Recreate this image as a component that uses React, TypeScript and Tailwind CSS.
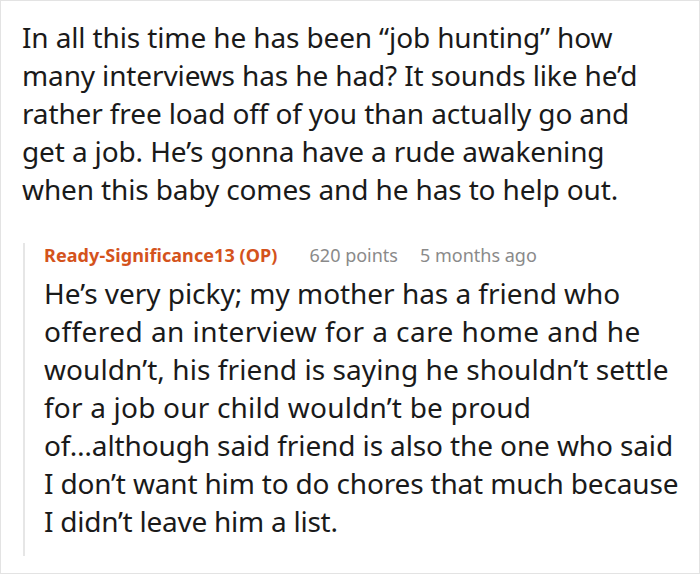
const parentLines = [
  'In all this time he has been “job hunting” how',
  'many interviews has he had? It sounds like he’d',
  'rather free load off of you than actually go and',
  'get a job. He’s gonna have a rude awakening',
  'when this baby comes and he has to help out.',
];

// Each reply line keeps its own spacing so the breaks land where the screenshot has them
const replyLines = [
  { text: 'He’s very picky; my mother has a friend who', cls: 'tracking-[-0.04px]' },
  { text: 'offered an interview for a care home and he', cls: 'tracking-[0.45px]' },
  { text: 'wouldn’t, his friend is saying he shouldn’t settle', cls: 'tracking-[0.08px]' },
  { text: 'for a job our child wouldn’t be proud', cls: 'tracking-[0.2px]' },
  { text: 'of…although said friend is also the one who said', cls: 'tracking-[-0.12px]' },
  { text: 'I don’t want him to do chores that much because', cls: 'tracking-[-0.17px]' },
  { text: 'I didn’t leave him a list.', cls: 'tracking-[-0.25px]' },
];

export default function App() {
  return (
    <div
      className="w-[700px] h-[574px] bg-white border border-[#e3e3e3] overflow-hidden"
      style={{ fontFamily: '"Noto Sans", "Open Sans", sans-serif' }}
    >
      <div className="pl-[21px] pt-[17px]">
        {/* Parent comment */}
        <div className="text-[28px] leading-[38px] tracking-[-0.13px] text-[#1a1a1a]">
          {parentLines.map((l) => (
            <div key={l} className="whitespace-nowrap">{l}</div>
          ))}
        </div>

        {/* Reply */}
        <div className="mt-[45px] ml-[1px] border-l-2 border-[#e6e6e6] pl-[19px] pb-[16px]">
          <div className="-mt-[10px] mb-[7px] flex items-baseline text-[18px] leading-[24px] whitespace-nowrap">
            <span className="font-bold text-[#d4531c] tracking-[0.08px]">Ready-Significance13 (OP)</span>
            <span className="ml-[32px] text-[#8a8a8a]">620 points</span>
            <span className="ml-[22px] text-[#8a8a8a]">5 months ago</span>
          </div>
          <div className="text-[28px] leading-[38px] text-[#1a1a1a]">
            {replyLines.map((l) => (
              <div key={l.text} className={`whitespace-nowrap ${l.cls}`}>{l.text}</div>
            ))}
          </div>
        </div>
      </div>
    </div>
  );
}
